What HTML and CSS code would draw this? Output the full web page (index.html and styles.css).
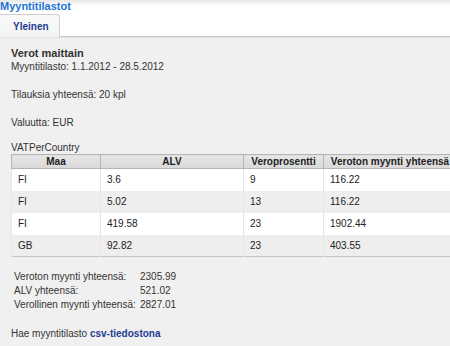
FILE: index.html
```html
<!DOCTYPE html>
<html lang="fi">
<head>
  <meta charset="UTF-8" />
  <title>Myyntitilastot</title>
  <link rel="stylesheet" href="styles.css">
</head>
<body>

  <!-- Header with page title and tabs -->
  <div class="header">
    <h1 class="page-title">Myyntitilastot</h1>
    <div class="tabs">
      <a href="#" class="tab active">Yleinen</a>
    </div>
  </div>

  <!-- Tab content -->
  <div class="content">
    <h2>Verot maittain</h2>
    <div>Myyntitilasto: 1.1.2012 - 28.5.2012</div>

    <p>Tilauksia yhteensä: 20 kpl</p>
    <p>Valuutta: EUR</p>

    <table class="vat-table">
      <caption>VATPerCountry</caption>
      <colgroup>
        <col style="width: 89px">
        <col style="width: 143px">
        <col style="width: 80px">
        <col style="width: 133px">
      </colgroup>
      <thead>
        <tr>
          <th>Maa</th>
          <th>ALV</th>
          <th>Veroprosentti</th>
          <th>Veroton myynti yhteensä</th>
        </tr>
      </thead>
      <tbody>
        <tr><td>FI</td><td>3.6</td><td>9</td><td>116.22</td></tr>
        <tr><td>FI</td><td>5.02</td><td>13</td><td>116.22</td></tr>
        <tr><td>FI</td><td>419.58</td><td>23</td><td>1902.44</td></tr>
        <tr><td>GB</td><td>92.82</td><td>23</td><td>403.55</td></tr>
      </tbody>
    </table>

    <div class="totals">
      <span>Veroton myynti yhteensä:</span><span>2305.99</span>
      <span>ALV yhteensä:</span><span>521.02</span>
      <span>Verollinen myynti yhteensä:</span><span>2827.01</span>
    </div>

    <p class="export">Hae myyntitilasto <a href="#">csv-tiedostona</a></p>
  </div>

</body>
</html>
```

FILE: styles.css
```css
* {
  box-sizing: border-box;
}

html, body {
  margin: 0;
  overflow-x: hidden;
}

body {
  font-family: "Liberation Sans", Arial, sans-serif;
  font-size: 10px;
  color: #333;
  background: #f0f0f0;
}

/* Header */
.header {
  background: linear-gradient(#e9e9e9, #fff 6px);
  border-bottom: 1px solid #c8c8c8;
  box-shadow: 0 1px 0 #e2e2e2;
}

.page-title {
  margin: 0;
  font-size: 11px;
  line-height: 13px;
  color: #1a74d4;
}

.tabs {
  display: flex;
  margin-top: 1px;
}

.tab {
  display: block;
  width: 61px;
  height: 23px;
  margin-left: -1px;
  margin-bottom: -1px;
  padding: 6px 0 0 13px;
  background: linear-gradient(#fafafa, #f3f3f3);
  border: 1px solid #cfcfcf;
  border-bottom: none;
  border-radius: 0 4px 0 0;
  color: #1d3c94;
  font-weight: bold;
  text-decoration: none;
}

/* Content */
.content {
  padding: 9px 0 20px 11px;
}

.content h2 {
  margin: 0;
  font-size: 11px;
  line-height: 14px;
}

.content div,
.content p {
  line-height: 14px;
}

.content p {
  margin: 14px 0 0;
}

/* VAT table */
.vat-table {
  margin-top: 11px;
  width: 445px;
  table-layout: fixed;
  border-collapse: collapse;
  border: 1px solid #c4c4c4;
}

.vat-table caption {
  text-align: left;
  line-height: 13px;
}

.vat-table th {
  height: 14px;
  padding: 0 4px;
  background: linear-gradient(#e6e6e6, #d9d9d9);
  border: 1px solid #b5b5b5;
  color: #222;
  font-weight: bold;
  text-align: center;
  white-space: nowrap;
}

.vat-table td {
  height: 22px;
  padding: 0 6px;
  border-left: 1px solid #e6e6e6;
  color: #222;
  white-space: nowrap;
}

.vat-table tbody tr:nth-child(odd) {
  background: #fff;
}

.vat-table tbody tr:nth-child(even) {
  background: #eeeeee;
}

/* Totals */
.totals {
  display: grid;
  grid-template-columns: 126px auto;
  margin: 13px 0 0 3px;
  line-height: 15px;
}

.content .export {
  margin-top: 15px;
}

.export a {
  color: #1d3c94;
  font-weight: bold;
  text-decoration: none;
}
```
